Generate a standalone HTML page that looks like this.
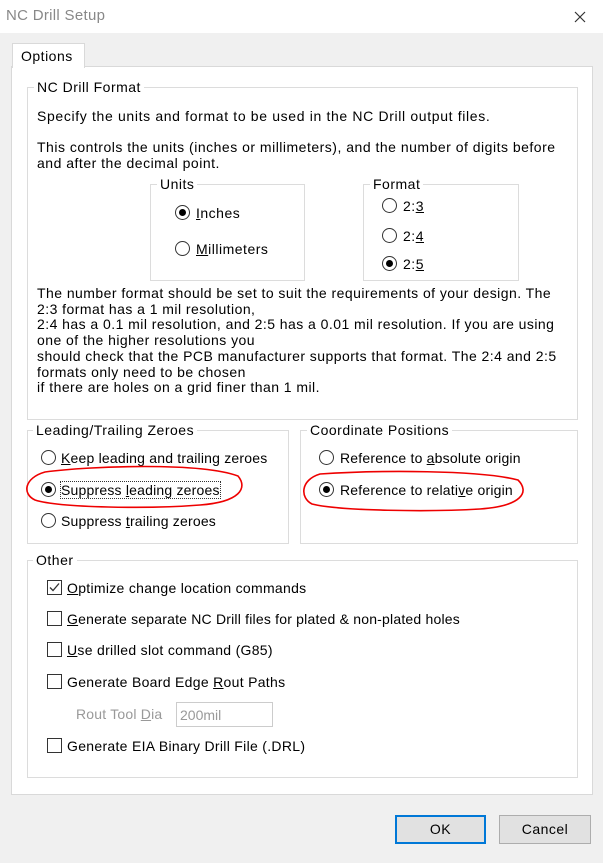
<!DOCTYPE html>
<html><head><meta charset="utf-8"><style>
*{margin:0;padding:0;box-sizing:border-box}
body{width:603px;height:863px;background:#f0f0f0;font-family:"Liberation Sans",sans-serif;font-size:14px;letter-spacing:0.5px;color:#000;position:relative;overflow:hidden}
.a{position:absolute;white-space:nowrap}
.g{position:absolute;border:1px solid #dcdcdc}
.lg{position:absolute;background:#fff;padding:0 3px;white-space:nowrap;line-height:16px}
.r{position:absolute;width:15px;height:15px;border:1px solid #333;border-radius:50%;background:#fff}
.r.on::after{content:"";position:absolute;left:3px;top:3px;width:7px;height:7px;border-radius:50%;background:#000}
.c{position:absolute;width:15px;height:15px;border:1px solid #333;background:#fff}
.t{position:absolute;white-space:nowrap;line-height:16px}
u{text-decoration:underline}
.btn{position:absolute;height:29px;background:#e1e1e1;border:1px solid #adadad;text-align:center;line-height:27px}
</style></head><body>
<div class="a" style="left:0;top:0;width:603px;height:33px;background:#fff"></div>
<div class="a" style="left:6px;top:7px;font-size:15px;letter-spacing:0.3px;color:#888">NC Drill Setup</div>
<svg class="a" style="left:574px;top:11px" width="12" height="12"><path d="M1 1L11 11M11 1L1 11" stroke="#333" stroke-width="1.2"/></svg>
<div class="a" style="left:11px;top:66px;width:582px;height:729px;background:#fff;border:1px solid #d9d9d9"></div>
<div class="a" style="left:12px;top:43px;width:73px;height:25px;background:#fff;border:1px solid #d9d9d9;border-bottom:none;padding:4px 0 0 8px">Options</div>

<div class="g" style="left:27px;top:87px;width:551px;height:333px"></div>
<div class="lg" style="left:34px;top:79px">NC Drill Format</div>
<div class="t" style="left:37px;top:108px;letter-spacing:0.65px">Specify the units and format to be used in the NC Drill output files.</div>
<div class="t" style="left:37px;top:139px">This controls the units (inches or millimeters), and the number of digits before</div>
<div class="t" style="left:37px;top:155px">and after the decimal point.</div>

<div class="g" style="left:150px;top:184px;width:155px;height:97px"></div>
<div class="lg" style="left:157px;top:176px">Units</div>
<div class="r on" style="left:175px;top:205px"></div><div class="t" style="left:196px;top:205px"><u>I</u>nches</div>
<div class="r" style="left:175px;top:241px"></div><div class="t" style="left:196px;top:241px"><u>M</u>illimeters</div>

<div class="g" style="left:363px;top:184px;width:156px;height:97px"></div>
<div class="lg" style="left:370px;top:176px">Format</div>
<div class="r" style="left:382px;top:198px"></div><div class="t" style="left:403px;top:198px">2:<u>3</u></div>
<div class="r" style="left:382px;top:228px"></div><div class="t" style="left:403px;top:228px">2:<u>4</u></div>
<div class="r on" style="left:382px;top:256px"></div><div class="t" style="left:403px;top:256px">2:<u>5</u></div>

<div class="t" style="left:37px;top:286px;line-height:15.7px;letter-spacing:0.45px">The number format should be set to suit the requirements of your design. The<br>2:3 format has a 1 mil resolution,<br>2:4 has a 0.1 mil resolution, and 2:5 has a 0.01 mil resolution. If you are using<br>one of the higher resolutions you<br>should check that the PCB manufacturer supports that format. The 2:4 and 2:5<br>formats only need to be chosen<br>if there are holes on a grid finer than 1 mil.</div>

<div class="g" style="left:27px;top:430px;width:262px;height:114px"></div>
<div class="lg" style="left:33px;top:422px">Leading/Trailing Zeroes</div>
<div class="r" style="left:41px;top:450px"></div><div class="t" style="left:61px;top:450px;letter-spacing:0.2px"><u>K</u>eep leading and trailing zeroes</div>
<div class="r on" style="left:41px;top:482px"></div><div class="t" style="left:61px;top:482px;outline:1px dotted #333;letter-spacing:0.2px">Suppress <u>l</u>eading zeroes</div>
<div class="r" style="left:41px;top:513px"></div><div class="t" style="left:61px;top:513px;letter-spacing:0.2px">Suppress <u>t</u>railing zeroes</div>

<div class="g" style="left:300px;top:430px;width:278px;height:114px"></div>
<div class="lg" style="left:307px;top:422px">Coordinate Positions</div>
<div class="r" style="left:319px;top:450px"></div><div class="t" style="left:340px;top:450px;letter-spacing:0.2px">Reference to <u>a</u>bsolute origin</div>
<div class="r on" style="left:319px;top:482px"></div><div class="t" style="left:340px;top:482px;letter-spacing:0.2px">Reference to relati<u>v</u>e origin</div>

<div class="g" style="left:27px;top:560px;width:551px;height:218px"></div>
<div class="lg" style="left:33px;top:552px">Other</div>
<div class="c" style="left:47px;top:580px"></div>
<svg class="a" style="left:48px;top:581px" width="13" height="13"><path d="M2 6.5L5 9.5L11 2.5" stroke="#333" stroke-width="1.3" fill="none"/></svg>
<div class="t" style="left:67px;top:580px;letter-spacing:0.3px"><u>O</u>ptimize change location commands</div>
<div class="c" style="left:47px;top:611px"></div><div class="t" style="left:67px;top:611px;letter-spacing:0.2px"><u>G</u>enerate separate NC Drill files for plated &amp; non-plated holes</div>
<div class="c" style="left:47px;top:642px"></div><div class="t" style="left:67px;top:642px;letter-spacing:0.3px"><u>U</u>se drilled slot command (G85)</div>
<div class="c" style="left:47px;top:674px"></div><div class="t" style="left:67px;top:674px;letter-spacing:0.3px">Generate Board Edge <u>R</u>out Paths</div>
<div class="t" style="left:76px;top:706px;color:#999;letter-spacing:0.2px">Rout Tool <u>D</u>ia</div>
<div class="a" style="left:176px;top:702px;width:97px;height:25px;border:1px solid #ccc;background:#fff;color:#999;padding:4px 3px;letter-spacing:0">200mil</div>
<div class="c" style="left:47px;top:738px"></div><div class="t" style="left:67px;top:738px;letter-spacing:0.3px">Generate EIA Binary Drill File (.DRL)</div>

<div class="btn" style="left:395px;top:815px;width:91px;border:2px solid #0078d7;line-height:25px">OK</div>
<div class="btn" style="left:499px;top:815px;width:92px">Cancel</div>

<svg class="a" style="left:0;top:0" width="603" height="863">
<path d="M45 472C90 466 200 462 238 476C248 488 240 502 200 505C150 509 60 508 35 500C22 494 24 478 45 472Z" stroke="#e00" stroke-width="1.6" fill="none"/>
<path d="M320 474C380 470 480 470 518 480C530 492 522 506 480 509C430 512 340 511 312 504C300 498 300 480 320 474Z" stroke="#e00" stroke-width="1.6" fill="none"/>
</svg>
</body></html>
